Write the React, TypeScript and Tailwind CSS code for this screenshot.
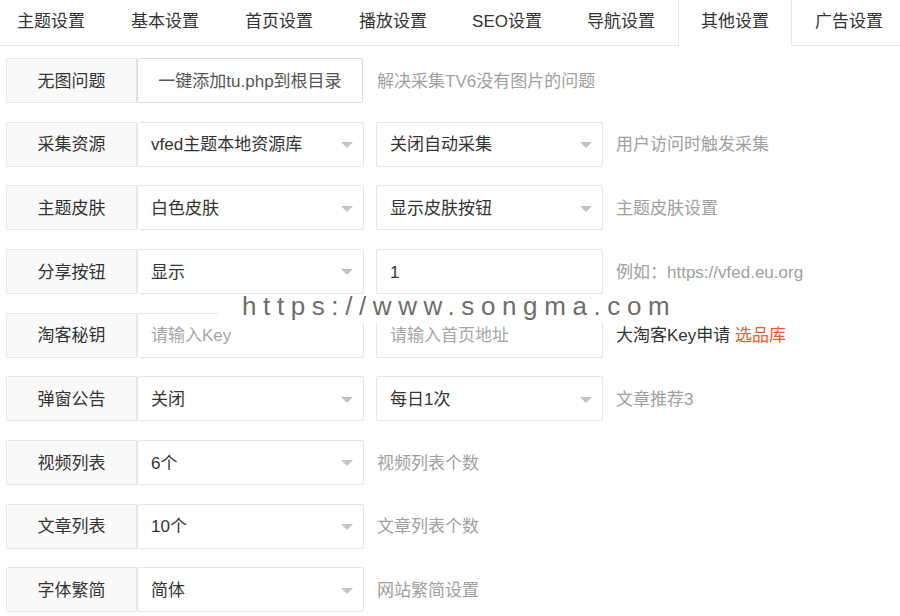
import React from "react";

const FONT = { fontFamily: '"Liberation Sans", "Noto Sans CJK SC", Arial, sans-serif' };

const tabs = ["主题设置", "基本设置", "首页设置", "播放设置", "SEO设置", "导航设置", "其他设置", "广告设置"];

function Label({ text }: { text: string }) {
  return (
    <div className="w-[131px] h-[45px] shrink-0 flex items-center justify-center pt-[2px] bg-[#fafafa] border border-[#e6e6e6] rounded-l-[2px] text-[#333]">
      {text}
    </div>
  );
}

function Select({ value, w = "w-[227px]" }: { value: string; w?: string }) {
  return (
    <div className={`${w} h-[45px] shrink-0 relative flex items-center pl-[13px] pt-[2px] bg-white border border-[#e6e6e6] rounded-[2px] text-[#333]`}>
      <span>{value}</span>
      <span className="absolute right-[10px] top-1/2 -mt-[2px] w-0 h-0 border-l-[6px] border-r-[6px] border-t-[6px] border-l-transparent border-r-transparent border-t-[#c2c2c2]" />
    </div>
  );
}

function Input({ value, placeholder }: { value?: string; placeholder?: string }) {
  return (
    <div className="w-[227px] h-[45px] shrink-0 flex items-center pl-[13px] pt-[2px] bg-white border border-[#e6e6e6] rounded-[2px]">
      {value ? <span className="text-[#333]">{value}</span> : <span className="text-[#a6a6a6]">{placeholder}</span>}
    </div>
  );
}

function Aux({ children }: { children: React.ReactNode }) {
  return <div className="text-[#a0a0a0] whitespace-nowrap pt-[2px]">{children}</div>;
}

function Row({ children }: { children: React.ReactNode }) {
  return <div className="flex items-center h-[45px]">{children}</div>;
}

export default function App() {
  return (
    <div className="relative w-[900px] h-[616px] bg-white overflow-hidden text-[17px]" style={FONT}>
      {/* Tabs */}
      <div className="flex h-[46px] border-b border-[#e6e6e6] -ml-[6px]">
        {tabs.map((t) => {
          const active = t === "其他设置";
          return (
            <div
              key={t}
              className={
                active
                  ? "w-[114px] shrink-0 h-[46px] -mb-px flex items-center justify-center pb-[2px] text-[#333] bg-white border-l border-r border-[#e6e6e6]"
                  : "w-[114px] shrink-0 h-[45px] flex items-center justify-center pb-[1px] text-[#333]"
              }
            >
              {t}
            </div>
          );
        })}
      </div>

      {/* Form */}
      <div className="flex flex-col gap-[18.67px] pl-[6px] pt-[12px]">
        <Row>
          <Label text="无图问题" />
          <div className="w-[226px] h-[45px] shrink-0 flex items-center justify-center pt-[2px] bg-white border border-[#dcdcdc] rounded-[2px] text-[#555]">
            一键添加tu.php到根目录
          </div>
          <div className="ml-[14px]">
            <Aux>解决采集TV6没有图片的问题</Aux>
          </div>
        </Row>

        <Row>
          <Label text="采集资源" />
          <Select value="vfed主题本地资源库" />
          <div className="ml-[12px]">
            <Select value="关闭自动采集" />
          </div>
          <div className="ml-[13px]">
            <Aux>用户访问时触发采集</Aux>
          </div>
        </Row>

        <Row>
          <Label text="主题皮肤" />
          <Select value="白色皮肤" />
          <div className="ml-[12px]">
            <Select value="显示皮肤按钮" />
          </div>
          <div className="ml-[13px]">
            <Aux>主题皮肤设置</Aux>
          </div>
        </Row>

        <Row>
          <Label text="分享按钮" />
          <Select value="显示" />
          <div className="ml-[12px]">
            <Input value="1" />
          </div>
          <div className="ml-[13px]">
            <Aux>例如：https://vfed.eu.org</Aux>
          </div>
        </Row>

        <Row>
          <Label text="淘客秘钥" />
          <Input placeholder="请输入Key" />
          <div className="ml-[12px]">
            <Input placeholder="请输入首页地址" />
          </div>
          <div className="ml-[13px] pt-[2px] whitespace-nowrap text-[#333]">
            大淘客Key申请 <span className="text-[#f4582f]">选品库</span>
          </div>
        </Row>

        <Row>
          <Label text="弹窗公告" />
          <Select value="关闭" />
          <div className="ml-[12px]">
            <Select value="每日1次" />
          </div>
          <div className="ml-[13px]">
            <Aux>文章推荐3</Aux>
          </div>
        </Row>

        <Row>
          <Label text="视频列表" />
          <Select value="6个" />
          <div className="ml-[13px]">
            <Aux>视频列表个数</Aux>
          </div>
        </Row>

        <Row>
          <Label text="文章列表" />
          <Select value="10个" />
          <div className="ml-[13px]">
            <Aux>文章列表个数</Aux>
          </div>
        </Row>

        <Row>
          <Label text="字体繁简" />
          <Select value="简体" />
          <div className="ml-[13px]">
            <Aux>网站繁简设置</Aux>
          </div>
        </Row>
      </div>

      {/* Watermark */}
      <div className="absolute left-[218px] top-[295px] w-[470px] h-[27px] bg-white">
        <div className="absolute left-[24px] top-[-4px] text-[26px] leading-[30px] tracking-[6.6px] text-[#6e6e6e] whitespace-nowrap">
          https://www.songma.com
        </div>
      </div>
    </div>
  );
}
